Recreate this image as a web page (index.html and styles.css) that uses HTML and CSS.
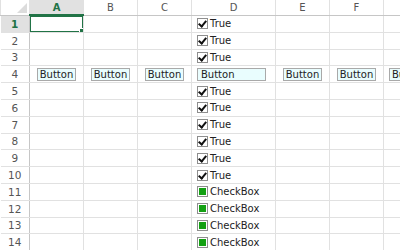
FILE: index.html
```html
<!DOCTYPE html>
<html>
<head>
    <title>Sheet</title>
    <link rel="stylesheet" href="styles.css">
</head>
<body>
    <table class="sheet">
        <colgroup>
            <col class="c-hd"><col class="c-n"><col class="c-n"><col class="c-n"><col class="c-w"><col class="c-n"><col class="c-n"><col class="c-n">
        </colgroup>
        <thead>
            <tr>
                <th class="corner"><span class="tri"></span></th>
                <th class="active">A</th><th>B</th><th>C</th><th>D</th><th>E</th><th>F</th><th></th>
            </tr>
        </thead>
        <tbody>
            <tr><th class="active">1</th><td class="sel"><span class="frame"><i class="handle"></i></span></td><td></td><td></td><td><span class="cb on"></span>True</td><td></td><td></td><td></td></tr>
            <tr><th>2</th><td></td><td></td><td></td><td><span class="cb on"></span>True</td><td></td><td></td><td></td></tr>
            <tr><th>3</th><td></td><td></td><td></td><td><span class="cb on"></span>True</td><td></td><td></td><td></td></tr>
            <tr><th>4</th><td class="mid"><span class="btn">Button</span></td><td class="mid"><span class="btn">Button</span></td><td class="mid"><span class="btn">Button</span></td><td><span class="btn wide">Button</span></td><td class="mid"><span class="btn">Button</span></td><td class="mid"><span class="btn">Button</span></td><td><span class="btn">Button</span></td></tr>
            <tr><th>5</th><td></td><td></td><td></td><td><span class="cb on"></span>True</td><td></td><td></td><td></td></tr>
            <tr><th>6</th><td></td><td></td><td></td><td><span class="cb on"></span>True</td><td></td><td></td><td></td></tr>
            <tr><th>7</th><td></td><td></td><td></td><td><span class="cb on"></span>True</td><td></td><td></td><td></td></tr>
            <tr><th>8</th><td></td><td></td><td></td><td><span class="cb on"></span>True</td><td></td><td></td><td></td></tr>
            <tr><th>9</th><td></td><td></td><td></td><td><span class="cb on"></span>True</td><td></td><td></td><td></td></tr>
            <tr><th>10</th><td></td><td></td><td></td><td><span class="cb on"></span>True</td><td></td><td></td><td></td></tr>
            <tr><th>11</th><td></td><td></td><td></td><td><span class="cb part"></span>CheckBox</td><td></td><td></td><td></td></tr>
            <tr><th>12</th><td></td><td></td><td></td><td><span class="cb part"></span>CheckBox</td><td></td><td></td><td></td></tr>
            <tr><th>13</th><td></td><td></td><td></td><td><span class="cb part"></span>CheckBox</td><td></td><td></td><td></td></tr>
            <tr><th>14</th><td></td><td></td><td></td><td><span class="cb part"></span>CheckBox</td><td></td><td></td><td></td></tr>
        </tbody>
    </table>
</body>
</html>
```

FILE: styles.css
```css
:root {
    --grid: #e1e1e1;
    --head-line: #c6c6c6;
    --green: #217346;
    --text: #222;
    --head-text: #555;
}

body {
    margin: 0;
    background: #fff;
    font-family: "DejaVu Sans", sans-serif;
    font-size: 10px;
    color: var(--text);
    overflow: hidden;
    width: 400px;
    height: 250px;
}

.sheet {
    border-collapse: collapse;
    table-layout: fixed;
    width: 437px;
}

.c-hd { width: 29px; }
.c-n { width: 54px; }
.c-w { width: 84px; }

th, td {
    border: 1px solid var(--grid);
    padding: 0;
    height: 15.8px;
    white-space: nowrap;
    overflow: hidden;
}

thead th {
    height: 14px;
    font-weight: normal;
    color: var(--head-text);
    border-top: none;
    border-bottom-color: var(--head-line);
    font-size: 10px;
}

tbody th {
    font-weight: normal;
    color: var(--head-text);
    border-left: none;
    border-right-color: var(--head-line);
    font-size: 10.5px;
}

th.active {
    background: #e1e1e1;
    color: var(--green);
    font-weight: bold;
}

thead th.active {
    border-bottom: 2px solid var(--green);
}

.corner {
    position: relative;
}

.tri {
    position: absolute;
    right: 2px;
    bottom: 2px;
    width: 0;
    height: 0;
    border-left: 10px solid transparent;
    border-bottom: 10px solid #dcdcdc;
}

td {
    padding-left: 5px;
}

td.mid {
    text-align: center;
    padding-left: 0;
}

td.sel {
    position: relative;
}

.frame {
    position: absolute;
    inset: -1px;
    border: 2px solid var(--green);
}

.handle {
    position: absolute;
    right: -4px;
    bottom: -4px;
    width: 5px;
    height: 5px;
    background: var(--green);
    border: 1px solid #fff;
}

.btn {
    display: inline-block;
    box-sizing: border-box;
    height: 13px;
    line-height: 11px;
    padding: 0 2px;
    background: #e9fdfe;
    border: 1px solid #a9a9a9;
    font-size: 10px;
    vertical-align: middle;
}

.btn.wide {
    width: 69px;
    padding-left: 3px;
}

.cb {
    display: inline-block;
    box-sizing: border-box;
    width: 11px;
    height: 11px;
    border: 1px solid #8e8e8e;
    background: #fff;
    margin-right: 2px;
    vertical-align: -2px;
    position: relative;
}

.cb.on::after {
    content: "";
    position: absolute;
    left: 2px;
    top: 0;
    width: 3px;
    height: 6px;
    border: solid #111;
    border-width: 0 2px 2px 0;
    transform: rotate(40deg);
}

.cb.part::after {
    content: "";
    position: absolute;
    left: 1px;
    top: 1px;
    width: 7px;
    height: 7px;
    background: #13a013;
}
```
